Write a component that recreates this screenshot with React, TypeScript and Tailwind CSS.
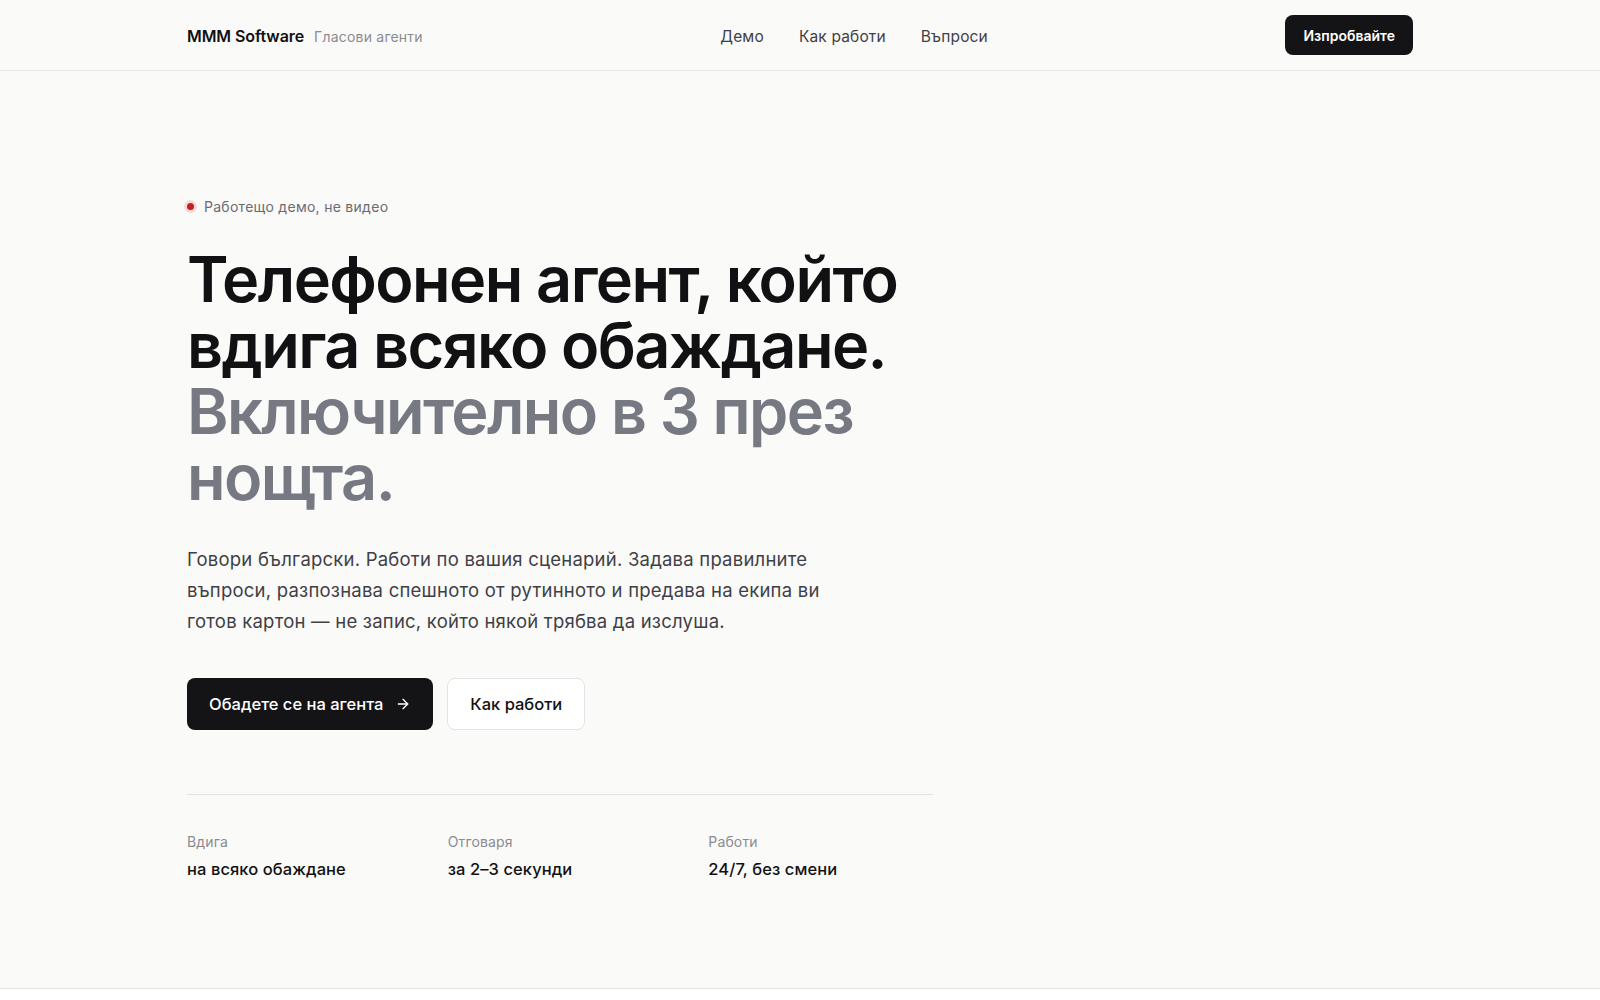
import { ArrowRight } from "lucide-react";
import React from "react";

const navLinks = ["Демо", "Как работи", "Въпроси"];

const stats = [
  { label: "Вдига", value: "на всяко обаждане" },
  { label: "Отговаря", value: "за 2–3 секунди" },
  { label: "Работи", value: "24/7, без смени" },
];

const Header = () => {
  return (
    <header className="h-[71px] border-b border-[#e7e7e5] bg-[#fafaf9]">
      <div className="mx-auto flex h-full max-w-[1280px] items-center justify-between px-[27px]">
        <div className="mt-[1px] flex items-baseline gap-2.5">
          <span className="text-[16px] font-semibold tracking-[-0.005em] text-[#111113]">
            MMM Software
          </span>
          <span className="text-[14px] tracking-[0.015em] text-[#8b8b90]">Гласови агенти</span>
        </div>

        <nav className="mt-[3px] flex items-center gap-[35px]">
          {navLinks.map((link) => (
            <a key={link} href="#" className="text-[15.5px] tracking-[0.01em] text-[#3f3f46]">
              {link}
            </a>
          ))}
        </nav>

        <button className="h-10 rounded-lg bg-[#141416] px-[18px] text-[14px] font-semibold text-white">
          Изпробвайте
        </button>
      </div>
    </header>
  );
};

const Hero = () => {
  return (
    <section className="h-[918px] border-b border-[#e4e4e2] bg-[#fafaf9]">
      <div className="mx-auto max-w-[1280px] px-[27px] pt-[125px]">
        <div className="w-[746px]">
          {/* live badge */}
          <div className="flex items-center gap-2.5">
            <span className="h-[7px] w-[7px] rounded-full bg-[#c81e1e] shadow-[0_0_0_3px_rgba(220,38,38,0.15)]" />
            <span className="text-[14px] tracking-[0.02em] text-[#6b6b70]">
              Работещо демо, не видео
            </span>
          </div>

          <h1 className="mt-[29px] text-[63px] font-semibold leading-[66px] tracking-[-0.025em] text-[#111113]">
            Телефонен агент, който
            <br />
            вдига всяко обаждане.
            <br />
            <span className="text-[#767981]">Включително в 3 през нощта.</span>
          </h1>

          <p className="mt-[34px] max-w-[650px] text-[18.5px] leading-[31px] tracking-[0.012em] text-[#3f3f46]">
            Говори български. Работи по вашия сценарий. Задава правилните въпроси,
            разпознава спешното от рутинното и предава на екипа ви готов картон — не
            запис, който някой трябва да изслуша.
          </p>

          <div className="mt-[41px] flex items-center gap-3.5">
            <button className="flex h-[52px] items-center gap-3 rounded-lg bg-[#141416] px-[22px] text-[16.5px] font-medium text-white">
              Обадете се на агента
              <ArrowRight className="h-4 w-4" strokeWidth={2} />
            </button>
            <button className="h-[52px] rounded-lg border border-[#e4e4e2] bg-white px-[22px] text-[16.5px] font-medium text-[#111113]">
              Как работи
            </button>
          </div>

          <div className="mt-[64px] border-t border-[#e4e4e2] pt-[36px]">
            <div className="grid grid-cols-3 gap-x-9">
              {stats.map((stat) => (
                <div key={stat.label}>
                  <p className="text-[14px] tracking-[0.01em] text-[#8b8b90]">{stat.label}</p>
                  <p className="mt-[5px] text-[16.5px] font-medium tracking-[0.005em] text-[#111113]">
                    {stat.value}
                  </p>
                </div>
              ))}
            </div>
          </div>
        </div>
      </div>
    </section>
  );
};

export default function App() {
  return (
    <div
      className="min-h-screen bg-white antialiased"
      style={{ fontFamily: "Inter, 'Noto Sans', sans-serif" }}
    >
      <Header />
      <Hero />
    </div>
  );
}
